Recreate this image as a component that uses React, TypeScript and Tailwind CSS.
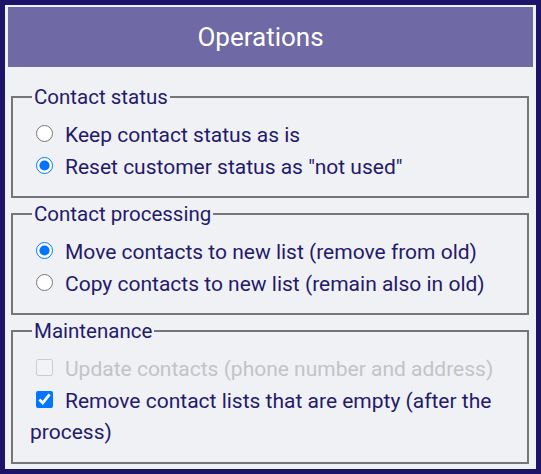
import React from "react";

const font = { fontFamily: "Roboto, 'Liberation Sans', sans-serif" };

function Row({
  type,
  checked,
  disabled,
  children,
}: {
  type: "radio" | "checkbox";
  checked?: boolean;
  disabled?: boolean;
  children: React.ReactNode;
}) {
  return (
    <label
      className={`block text-[21px] leading-[31.5px] ${disabled ? "text-[#c3c3c6]" : "text-[#241a6c]"}`}
    >
      <input
        type={type}
        defaultChecked={checked}
        disabled={disabled}
        className="w-[17px] h-[17px] ml-[6px] mr-[12px] align-[0px]"
      />
      {children}
    </label>
  );
}

function Group({ legend, children }: { legend: string; children: React.ReactNode }) {
  return (
    <fieldset className="ml-[3px] mr-[4px] border-2 border-[#767676] pl-[17px] pr-[10px] pt-[12px] pb-[13px]">
      <legend className="px-[2px] ml-[2px] text-[20.5px] leading-[22px] text-[#241a6c]">{legend}</legend>
      {children}
    </fieldset>
  );
}

export default function App() {
  return (
    <div className="w-[541px] h-[474px] bg-[#1d1368] p-[5px]" style={font}>
      <div className="h-full bg-[#f0f1f5] pt-[2px] px-[3px] flex flex-col">
        <div className="h-[60px] bg-[#6f69a5] flex items-center justify-center pr-[20px] text-white text-[26px]">
          Operations
        </div>
        <div className="mt-[19px] flex flex-col gap-[5px]">
          <Group legend="Contact status">
            <Row type="radio">Keep contact status as is</Row>
            <Row type="radio" checked>
              Reset customer status as "not used"
            </Row>
          </Group>
          <Group legend="Contact processing">
            <Row type="radio" checked>
              Move contacts to new list (remove from old)
            </Row>
            <Row type="radio">Copy contacts to new list (remain also in old)</Row>
          </Group>
          <Group legend="Maintenance">
            <Row type="checkbox" disabled>
              Update contacts (phone number and address)
            </Row>
            <Row type="checkbox" checked>
              Remove contact lists that are empty (after the process)
            </Row>
          </Group>
        </div>
      </div>
    </div>
  );
}
